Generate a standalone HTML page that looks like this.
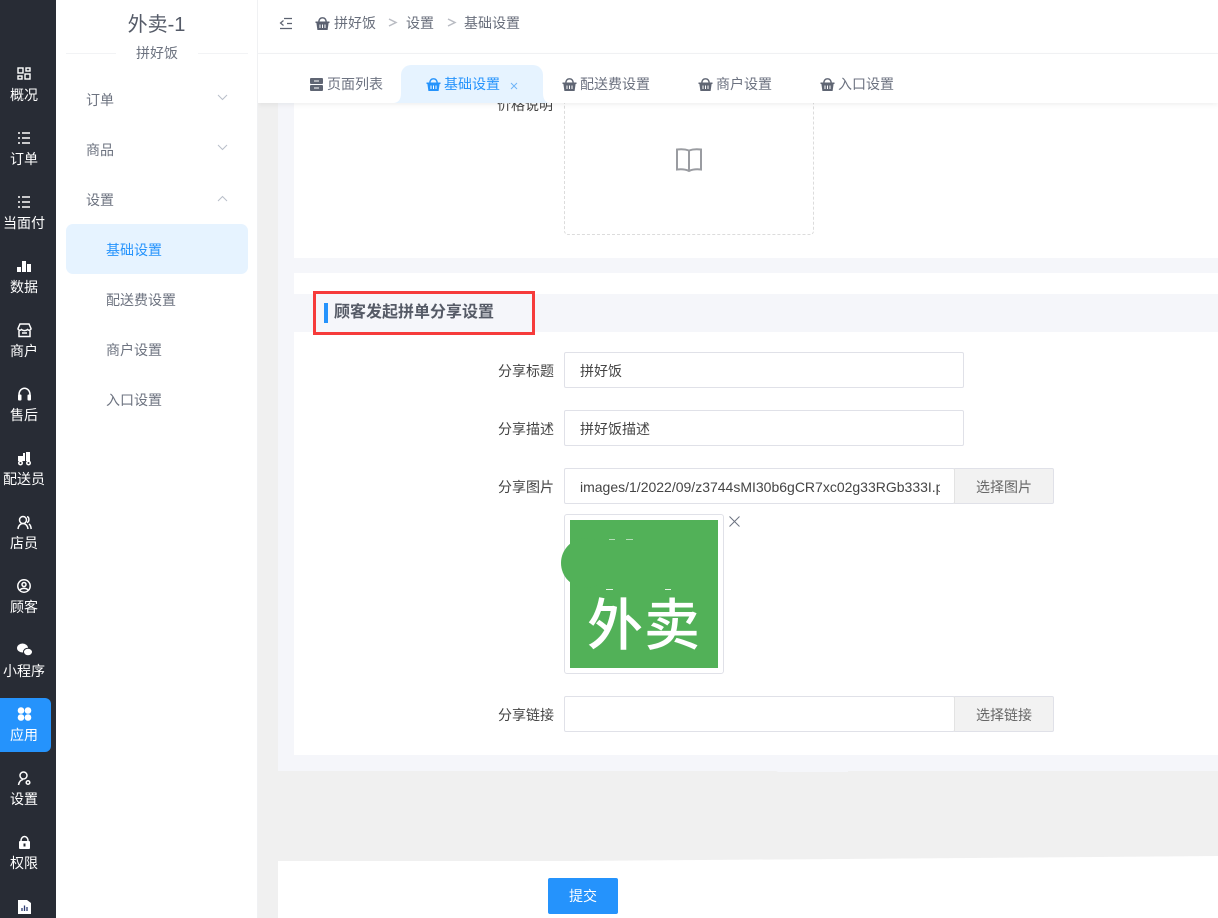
<!DOCTYPE html>
<html lang="zh-CN"><head><meta charset="utf-8"><title>基础设置</title>
<style>
html,body{margin:0;padding:0;width:1218px;height:918px;overflow:hidden;background:#f0f0f0}
body{position:relative;font-family:"Liberation Sans","Noto Sans CJK SC",sans-serif;font-size:14px;color:#555}
.a{position:absolute}
.t{position:absolute;white-space:nowrap;line-height:20px}
.nav{position:absolute;left:0;width:48px;text-align:center;color:#fff;font-size:14px;line-height:18px;white-space:nowrap}
.nav svg{position:absolute;left:17px;top:-19px}
.sm{position:absolute;left:86px;color:#6d7380;font-size:14px;line-height:20px}
.sub{position:absolute;left:106px;color:#6d7380;font-size:14px;line-height:20px}
.lb{position:absolute;width:76px;left:478px;text-align:right;color:#444;font-size:14px;line-height:20px;white-space:nowrap;margin-top:1px}
.in{position:absolute;left:564px;height:34px;border:1px solid #e0e1e8;border-radius:2px;background:#fff;color:#444;font-size:14px;line-height:36px;padding-left:15px;box-sizing:content-box;white-space:nowrap;overflow:hidden}
.btn{position:absolute;left:954px;width:98px;height:34px;border:1px solid #e0e1e8;border-left:1px solid #e3e3e3;border-radius:0 2px 2px 0;background:#f2f2f2;color:#666;text-align:center;line-height:36px;font-size:14px}
.tb{position:absolute;top:74px;color:#6c7280;font-size:14px;line-height:20px;white-space:nowrap}
</style></head><body>

<!-- content bg -->
<div class="a" style="left:258px;top:0;width:960px;height:918px;background:#f0f0f0"></div>
<div class="a" style="left:278px;top:90px;width:940px;height:681px;background:#f5f6fa"></div>
<div class="a" style="left:294px;top:90px;width:924px;height:168px;background:#fff"></div>
<div class="a" style="left:294px;top:273px;width:924px;height:482px;background:#fff"></div>
<svg class="a" style="left:770px;top:764px" width="100" height="8"><path d="M6 8C14 3 50 2 78 7L78 8Z" fill="#f5f6fa"/></svg>
<svg class="a" style="left:278px;top:850px" width="940" height="68"><path d="M0 11H300L940 6V68H0Z" fill="#fff"/></svg>

<!-- card 1 upload box -->
<div class="a" style="left:564px;top:80px;width:248px;height:153px;border:1px dashed #dcdcdc;border-radius:4px"></div>
<div class="t" style="left:497px;top:95px;color:#444">价格说明</div>
<svg class="a" style="left:675px;top:147px" width="28" height="26" viewBox="0 0 28 26" fill="none" stroke="#9a9ca1" stroke-width="2"><path d="M2 2.500C6 2 10 2 14 3.500C18 2 22 2 26 2.500V22.500C22 22 18 22 14 24C10 22 6 22 2 22.500Z"/><path d="M14 3.500V24"/></svg>

<!-- section title -->
<div class="a" style="left:294px;top:294px;width:924px;height:38px;background:#f5f6fa"></div>
<div class="a" style="left:313px;top:291px;width:222px;height:44px;box-sizing:border-box;border:3px solid #f63b3b;background:#f5f6fa"></div>
<div class="a" style="left:324px;top:303px;width:4px;height:20px;background:#2593fc"></div>
<div class="t" style="left:334px;top:302px;font-size:16px;font-weight:bold;color:#555a66;line-height:22px">顾客发起拼单分享设置</div>

<!-- form -->
<div class="lb" style="top:360px">分享标题</div>
<div class="in" style="top:352px;width:383px">拼好饭</div>
<div class="lb" style="top:418px">分享描述</div>
<div class="in" style="top:410px;width:383px">拼好饭描述</div>
<div class="lb" style="top:476px">分享图片</div>
<div class="in" style="top:468px;width:374px;padding-right:0"><span style="display:block;width:360px;overflow:hidden">images/1/2022/09/z3744sMI30b6gCR7xc02g33RGb333I.png</span></div>
<div class="btn" style="top:468px">选择图片</div>

<div class="a" style="left:564px;top:514px;width:158px;height:158px;border:1px solid #e0e1e8;border-radius:3px;background:#fff"></div>
<div class="a" style="left:570px;top:520px;width:148px;height:148px;background:#52b158;overflow:hidden"></div>
<div class="a" style="left:561px;top:538px;width:50px;height:50px;border-radius:50%;background:#52b158"></div>
<div class="a" style="left:570px;top:520px;width:148px;height:148px;overflow:hidden;color:#fff;font-size:56px;letter-spacing:1px;text-align:center;white-space:nowrap;font-weight:500;font-family:'Noto Sans CJK SC',sans-serif"><span style="position:relative;display:block;line-height:204px">外卖</span></div>
<div class="a" style="left:609px;top:539px;width:6px;height:1px;background:#b5dcb8"></div>
<div class="a" style="left:626px;top:539px;width:7px;height:1px;background:#b5dcb8"></div>
<div class="a" style="left:606px;top:589px;width:7px;height:1px;background:#e4f3e5"></div>
<div class="a" style="left:665px;top:589px;width:6px;height:1px;background:#e4f3e5"></div>
<svg class="a" style="left:728px;top:515px" width="13" height="13" fill="none" stroke="#6c7280" stroke-width="1"><path d="M1.500 1.500L11.500 11.500M11.500 1.500L1.500 11.500"/></svg>

<div class="lb" style="top:704px">分享链接</div>
<div class="in" style="top:696px;width:374px;padding-right:0"></div>
<div class="btn" style="top:696px">选择链接</div>

<!-- submit -->
<div class="a" style="left:548px;top:878px;width:70px;height:36px;background:#2593fc;border-radius:2px;color:#fff;text-align:center;line-height:37px;font-size:14px">提交</div>

<!-- header -->
<div class="a" style="left:258px;top:0;width:960px;height:53px;background:#fff"></div>
<div class="a" style="left:258px;top:53px;width:960px;height:1px;background:#f2f3f5"></div>
<div class="a" style="left:258px;top:54px;width:960px;height:49px;background:#fff;box-shadow:0 2px 5px rgba(0,0,0,.06)"></div>

<svg class="a" style="left:279px;top:17px" width="14" height="13" fill="none" stroke="#5c6270" stroke-width="1.200"><path d="M5 1.500H13M8 6.500H13M1 11.500H13M4.500 3.500L1.500 6L4.500 8.500"/></svg>
<svg class="a" style="left:315px;top:16px" width="15" height="15" viewBox="0 0 15 15"><path d="M3.800 6C4 3 5.500 1.800 7.500 1.800S11 3 11.200 6" fill="none" stroke="#5a6070" stroke-width="1.400"/><path d="M.5 5.500H14.500V7H13.600L12.600 14H2.400L1.400 7H.5Z" fill="#5a6070"/><path d="M5 8.500V12M7.500 8.500V12M10 8.500V12" stroke="#fff" stroke-width="1"/></svg>
<div class="t" style="left:334px;top:13px;color:#686e7b">拼好饭</div>
<svg class="a" style="left:388px;top:18px" width="10" height="10" fill="none" stroke="#b9bcc3" stroke-width="1.500"><path d="M1 1L8 4.500L1 8"/></svg>
<div class="t" style="left:406px;top:13px;color:#686e7b">设置</div>
<svg class="a" style="left:447px;top:18px" width="10" height="10" fill="none" stroke="#b9bcc3" stroke-width="1.500"><path d="M1 1L8 4.500L1 8"/></svg>
<div class="t" style="left:464px;top:13px;color:#686e7b">基础设置</div>

<!-- tabs -->
<div class="a" style="left:401px;top:65px;width:142px;height:38px;background:#e6f3ff;border-radius:10px 10px 0 0"></div>
<svg class="a" style="left:393px;top:93px" width="10" height="10"><path d="M0 10C5 10 8 7 8 0V10Z" fill="#e6f3ff"/></svg>
<svg class="a" style="left:541px;top:93px" width="10" height="10"><path d="M10 10C5 10 2 7 2 0V10Z" fill="#e6f3ff"/></svg>

<svg class="a" style="left:310px;top:78px" width="13" height="13"><rect width="13" height="6" rx="1" fill="#5f6573"/><rect y="7" width="13" height="6" rx="1" fill="#5f6573"/><path d="M4 3H9M4 10H9" stroke="#fff" stroke-width="1"/></svg>
<div class="tb" style="left:327px">页面列表</div>

<svg class="a" style="left:426px;top:77px" width="15" height="15" viewBox="0 0 15 15"><path d="M3.800 6C4 3 5.500 1.800 7.500 1.800S11 3 11.200 6" fill="none" stroke="#2593fc" stroke-width="1.400"/><path d="M.5 5.500H14.500V7H13.600L12.600 14H2.400L1.400 7H.5Z" fill="#2593fc"/><path d="M5 8.500V12M7.500 8.500V12M10 8.500V12" stroke="#fff" stroke-width="1"/></svg>
<div class="tb" style="left:444px;color:#2593fc">基础设置</div>
<svg class="a" style="left:510px;top:82px" width="8" height="8" stroke="#6fb5f8" stroke-width="1"><path d="M1 1L7 7M7 1L1 7"/></svg>

<svg class="a" style="left:562px;top:77px" width="15" height="15" viewBox="0 0 15 15"><path d="M3.800 6C4 3 5.500 1.800 7.500 1.800S11 3 11.200 6" fill="none" stroke="#5f6573" stroke-width="1.400"/><path d="M.5 5.500H14.500V7H13.600L12.600 14H2.400L1.400 7H.5Z" fill="#5f6573"/><path d="M5 8.500V12M7.500 8.500V12M10 8.500V12" stroke="#fff" stroke-width="1"/></svg>
<div class="tb" style="left:580px">配送费设置</div>
<svg class="a" style="left:698px;top:77px" width="15" height="15" viewBox="0 0 15 15"><path d="M3.800 6C4 3 5.500 1.800 7.500 1.800S11 3 11.200 6" fill="none" stroke="#5f6573" stroke-width="1.400"/><path d="M.5 5.500H14.500V7H13.600L12.600 14H2.400L1.400 7H.5Z" fill="#5f6573"/><path d="M5 8.500V12M7.500 8.500V12M10 8.500V12" stroke="#fff" stroke-width="1"/></svg>
<div class="tb" style="left:716px">商户设置</div>
<svg class="a" style="left:820px;top:77px" width="15" height="15" viewBox="0 0 15 15"><path d="M3.800 6C4 3 5.500 1.800 7.500 1.800S11 3 11.200 6" fill="none" stroke="#5f6573" stroke-width="1.400"/><path d="M.5 5.500H14.500V7H13.600L12.600 14H2.400L1.400 7H.5Z" fill="#5f6573"/><path d="M5 8.500V12M7.500 8.500V12M10 8.500V12" stroke="#fff" stroke-width="1"/></svg>
<div class="tb" style="left:838px">入口设置</div>

<!-- secondary sidebar -->
<div class="a" style="left:56px;top:0;width:202px;height:918px;background:#fff;border-right:1px solid #f0f1f3;box-sizing:border-box"></div>
<div class="a" style="left:66px;top:53px;width:182px;height:1px;background:#f2f3f5"></div>
<div class="t" style="left:56px;width:201px;top:12px;text-align:center;font-size:20px;line-height:26px;color:#555b68">外卖-1</div>
<div class="a" style="left:116px;top:44px;width:82px;height:18px;background:#fff;text-align:center;font-size:14px;line-height:18px;color:#6d7380">拼好饭</div>
<div class="sm" style="top:90px">订单</div>
<div class="sm" style="top:140px">商品</div>
<div class="sm" style="top:190px">设置</div>
<svg class="a" style="left:217px;top:94px" width="11" height="7" fill="none" stroke="#b9bfca"><path d="M1 1L5.500 5.500L10 1"/></svg>
<svg class="a" style="left:217px;top:144px" width="11" height="7" fill="none" stroke="#b9bfca"><path d="M1 1L5.500 5.500L10 1"/></svg>
<svg class="a" style="left:217px;top:195px" width="11" height="7" fill="none" stroke="#b9bfca"><path d="M1 6L5.500 1.500L10 6"/></svg>
<div class="a" style="left:66px;top:224px;width:182px;height:50px;background:#e6f3ff;border-radius:7px"></div>
<div class="sub" style="top:240px;color:#2593fc">基础设置</div>
<div class="sub" style="top:290px">配送费设置</div>
<div class="sub" style="top:340px">商户设置</div>
<div class="sub" style="top:390px">入口设置</div>

<!-- primary sidebar -->
<div class="a" style="left:0;top:0;width:56px;height:918px;background:#282c35"></div>
<div class="a" style="left:0;top:698px;width:51px;height:54px;background:#2593fc;border-radius:0 6px 6px 0"></div>

<div class="nav" style="top:86px"><svg width="22" height="16" viewBox="0 0 22 16"><g fill="none" stroke="#fff" stroke-width="1.400"><rect x="1" y="1" width="5" height="5"/><rect x="9" y="1" width="4" height="3"/><rect x="1" y="9" width="4" height="3"/><rect x="8" y="7" width="5" height="5"/></g></svg>概况</div>
<div class="nav" style="top:150px"><svg width="22" height="16" viewBox="0 0 22 16"><path d="M1 2H3M5 2H13M1 7H3M5 7H13M1 12H3M5 12H13" stroke="#fff" stroke-width="1.500"/></svg>订单</div>
<div class="nav" style="top:214px"><svg width="22" height="16" viewBox="0 0 22 16"><path d="M1 2H3M5 2H13M1 7H3M5 7H13M1 12H3M5 12H13" stroke="#fff" stroke-width="1.500"/></svg>当面付</div>
<div class="nav" style="top:278px"><svg width="22" height="16" viewBox="0 0 22 16"><path d="M0 8H4V13H0ZM5 2H9V13H5ZM10 5H14V13H10Z" fill="#fff"/></svg>数据</div>
<div class="nav" style="top:342px"><svg width="22" height="16" viewBox="0 0 22 16"><path d="M3 1H12L14 5.500C14 7 12 8 10.500 6.500C9 8 6 8 4.500 6.500C3 8 1 7 1 5.500ZM2 8V13.500H13V8" fill="none" stroke="#fff" stroke-width="1.500"/><path d="M5 10H10" stroke="#fff" stroke-width="1.500"/></svg>商户</div>
<div class="nav" style="top:406px"><svg width="22" height="16" viewBox="0 0 22 16"><path d="M2 8C2 -1 13 -1 13 8" fill="none" stroke="#fff" stroke-width="1.500"/><rect x="1" y="7.500" width="3.500" height="6" rx="1" fill="#fff"/><rect x="10.500" y="7.500" width="3.500" height="6" rx="1" fill="#fff"/></svg>售后</div>
<div class="nav" style="top:470px"><svg width="22" height="16" viewBox="0 0 22 16"><path d="M1 5H6V2H8V10H1ZM9 1H13V10H9Z" fill="#fff"/><circle cx="3.500" cy="12" r="2.500" fill="#fff"/><circle cx="11.500" cy="12" r="2.500" fill="#fff"/><circle cx="3.500" cy="12" r="1" fill="#282c35"/><circle cx="11.500" cy="12" r="1" fill="#282c35"/></svg>配送员</div>
<div class="nav" style="top:534px"><svg width="22" height="16" viewBox="0 0 22 16" fill="none" stroke="#fff" stroke-width="1.500"><circle cx="6" cy="5" r="3.500"/><path d="M1 14C1.500 10 4 8.500 6 8.500S10.500 10 11 14M10 1.800C12.500 2 12.500 7 10 7.500M12 9C13.500 10 14 12 14.200 14"/></svg>店员</div>
<div class="nav" style="top:598px"><svg width="22" height="16" viewBox="0 0 22 16" fill="none" stroke="#fff" stroke-width="1.500"><circle cx="7" cy="7" r="6.200"/><circle cx="7" cy="5.500" r="2"/><path d="M3 11C4.500 8.800 9.500 8.800 11 11"/></svg>顾客</div>
<div class="nav" style="top:662px"><svg width="22" height="16" viewBox="0 0 22 16"><ellipse cx="5.500" cy="5" rx="5.500" ry="4.500" fill="#fff"/><ellipse cx="11" cy="9" rx="4.500" ry="3.800" fill="#fff" stroke="#282c35"/></svg>小程序</div>
<div class="nav" style="top:726px"><svg width="22" height="16" viewBox="0 0 22 16"><g fill="#fff"><circle cx="4" cy="3.500" r="3.300"/><circle cx="11" cy="3.500" r="3.300"/><circle cx="4" cy="10.500" r="3.300"/><circle cx="11" cy="10.500" r="3.300"/><rect x="4" y="3.500" width="2.500" height="2.500"/><rect x="8.500" y="3.500" width="2.500" height="2.500"/><rect x="4" y="8" width="2.500" height="2.500"/><rect x="8.500" y="8" width="2.500" height="2.500"/></g></svg>应用</div>
<div class="nav" style="top:790px"><svg width="22" height="16" viewBox="0 0 22 16" fill="none" stroke="#fff" stroke-width="1.500"><circle cx="6.500" cy="4.500" r="3.500"/><path d="M1.500 14C2 11 3.500 9 6 8.500"/><circle cx="11" cy="11.500" r="1.800"/></svg>设置</div>
<div class="nav" style="top:854px"><svg width="22" height="16" viewBox="0 0 22 16"><path d="M4 6C4 0 11 0 11 6" fill="none" stroke="#fff" stroke-width="1.500"/><rect x="2" y="6" width="11" height="8" rx="1" fill="#fff"/><rect x="6.500" y="8.500" width="2" height="3" fill="#282c35"/></svg>权限</div>
<div class="nav" style="top:918px"><svg width="22" height="16" viewBox="0 0 22 16"><path d="M1 1H10L14 4V15H1Z" fill="#fff"/><path d="M5 12V9M7.500 12V6.500M10 12V8" stroke="#2b3a70" stroke-width="1.300"/></svg></div>

</body></html>
